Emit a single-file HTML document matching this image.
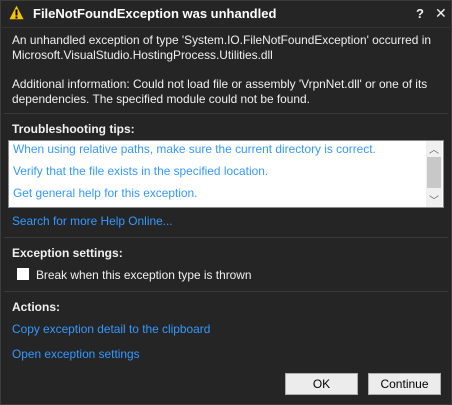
<!DOCTYPE html>
<html><head><style>
body{margin:0;width:452px;height:405px;background:#252526;overflow:hidden;font-family:"Liberation Sans",sans-serif;font-size:12px;color:#f1f1f1;position:relative}
div,span{position:absolute;white-space:nowrap}
.l{color:#3399ff}
.b{font-weight:bold}
.sep{left:4px;width:444px;height:1px;background:#3a3a3a}
.btn{background:#ececec;border:1px solid #adadad;color:#000;text-align:center;line-height:20px;font-size:12px;width:71px;height:20px}
</style></head><body>
<div style="left:0;top:0;width:450px;height:403px;border:1px solid #3c3c3c"></div>
<svg style="position:absolute;left:8px;top:4px" width="17" height="17" viewBox="0 0 17 17"><path d="M8.5 1 L16 15.5 L1 15.5 Z" fill="#f5c400" stroke="#222" stroke-width="0.6"/><rect x="7.5" y="5.5" width="2" height="6" fill="#000"/><rect x="7.5" y="12.5" width="2" height="2" fill="#000"/></svg>
<div class="b" style="left:33px;top:6px;font-size:13px;color:#fff">FileNotFoundException was unhandled</div>
<div class="b" style="left:416px;top:6px;font-size:13px">?</div>
<div style="left:435px;top:5px;font-size:14px">✕</div>
<div class="sep" style="top:27px;left:0;width:452px;background:#333"></div>
<div style="left:12px;top:33px;font-size:11.9px;line-height:15px">An unhandled exception of type 'System.IO.FileNotFoundException' occurred in<br>Microsoft.VisualStudio.HostingProcess.Utilities.dll</div>
<div style="left:12px;top:77px;font-size:11.9px;line-height:15px">Additional information: Could not load file or assembly 'VrpnNet.dll' or one of its<br>dependencies. The specified module could not be found.</div>
<div class="sep" style="top:113px"></div>
<div class="b" style="left:12px;top:122px">Troubleshooting tips:</div>
<div style="left:8px;top:140px;width:434px;height:66px;background:#fff;border:1px solid #8a8a8a"></div>
<div class="l" style="left:13px;top:142px;font-size:11.9px">When using relative paths, make sure the current directory is correct.</div>
<div class="l" style="left:13px;top:164px;font-size:11.9px">Verify that the file exists in the specified location.</div>
<div class="l" style="left:13px;top:186px;font-size:11.9px">Get general help for this exception.</div>
<div style="left:426px;top:141px;width:16px;height:66px;background:#f0f0f0"></div>
<div style="left:427px;top:157px;width:14px;height:31px;background:#c8c8c8"></div>
<div style="left:429px;top:141px;color:#606060;font-size:10px">︿</div>
<div style="left:429px;top:192px;color:#606060;font-size:10px">﹀</div>
<div class="l" style="left:12px;top:214px;font-size:11.9px">Search for more Help Online...</div>
<div class="sep" style="top:237px"></div>
<div class="b" style="left:12px;top:246px">Exception settings:</div>
<div style="left:17px;top:268px;width:12px;height:12px;background:#fff"></div>
<div style="left:36px;top:268px;font-size:11.9px">Break when this exception type is thrown</div>
<div class="sep" style="top:291px"></div>
<div class="b" style="left:12px;top:300px">Actions:</div>
<div class="l" style="left:12px;top:322px;font-size:11.9px">Copy exception detail to the clipboard</div>
<div class="l" style="left:12px;top:347px;font-size:11.9px">Open exception settings</div>
<div class="btn" style="left:285px;top:373px">OK</div>
<div class="btn" style="left:368px;top:373px">Continue</div>
</body></html>
